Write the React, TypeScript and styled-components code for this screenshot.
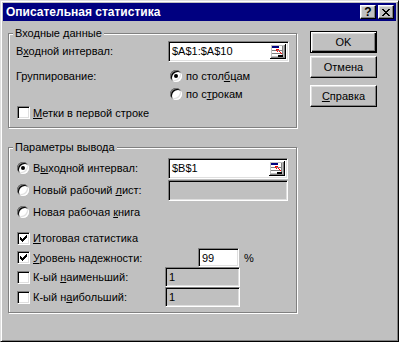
import React from "react";
import styled, { createGlobalStyle, css } from "styled-components";

const GlobalStyle = createGlobalStyle`
  html, body {
    margin: 0;
    padding: 0;
    background: #c0c0c0;
  }
  body {
    font-family: "Liberation Sans", Arial, sans-serif;
    font-size: 11px;
    color: #000;
  }
  * {
    box-sizing: border-box;
  }
`;

const CHECK =
  "M6 0h1v1h-1zM5 1h2v1h-2zM0 2h1v1h-1zM4 2h3v1h-3zM0 3h2v1h-2zM3 3h3v1h-3zM0 4h5v1h-5zM1 5h3v1h-3zM2 6h1v1h-1z";
const CLOSE =
  "M0 0h2v1h-2zM6 0h2v1h-2zM1 1h2v1h-2zM5 1h2v1h-2zM2 2h4v1h-4zM3 3h2v1h-2zM2 4h4v1h-4zM1 5h2v1h-2zM5 5h2v1h-2zM0 6h2v1h-2zM6 6h2v1h-2z";

const RefIcon = () => (
  <svg width="16" height="15" viewBox="0 0 16 15" shapeRendering="crispEdges">
    <rect x="0" y="0" width="16" height="15" fill="#c0c0c0" />
    <rect x="0" y="0" width="15" height="1" fill="#fff" />
    <rect x="0" y="0" width="1" height="14" fill="#fff" />
    <rect x="0" y="14" width="16" height="1" fill="#000" />
    <rect x="15" y="0" width="1" height="15" fill="#000" />
    <rect x="1" y="13" width="14" height="1" fill="#808080" />
    <rect x="14" y="1" width="1" height="13" fill="#808080" />
    <rect x="2" y="2" width="11" height="10" fill="#fff" />
    <rect x="2" y="2" width="7" height="2" fill="#000080" />
    <rect x="2" y="6" width="11" height="1" fill="#808080" />
    <rect x="2" y="9" width="11" height="1" fill="#808080" />
    <rect x="12" y="2" width="1" height="10" fill="#808080" />
    <path d="M6 5h3v1h-2v1h3v1h1v1h1v1h-1v-1h-1v-1h-1v-1h-1v1h-1z" fill="#ff0000" />
    <rect x="8" y="11" width="5" height="2" fill="#000" />
  </svg>
);

const Window = styled.div`
  width: 399px;
  height: 342px;
  background: #c0c0c0;
  border: 1px solid;
  border-color: #dfdfdf #000 #000 #dfdfdf;
  box-shadow: inset 1px 1px 0 #fff, inset -1px -1px 0 #808080;
  padding: 2px;
  display: flex;
  flex-direction: column;
`;

const TitleBar = styled.div`
  height: 18px;
  flex: none;
  background: #000080;
  display: flex;
  align-items: center;
  padding: 0 2px 0 3px;
`;

const Title = styled.div`
  flex: 1;
  color: #fff;
  font-weight: bold;
  font-size: 12px;
  white-space: nowrap;
`;

const TitleButtons = styled.div`
  display: flex;
  gap: 2px;
`;

const TitleButton = styled.div`
  width: 16px;
  height: 14px;
  background: #c0c0c0;
  border: 1px solid;
  border-color: #fff #000 #000 #fff;
  box-shadow: inset -1px -1px 0 #808080, inset 1px 1px 0 #dfdfdf;
  display: flex;
  align-items: center;
  justify-content: center;
  font-weight: bold;
  font-size: 12px;
  line-height: 12px;
`;

const Body = styled.div`
  flex: 1;
  display: flex;
  padding-left: 5px;
`;

const LeftCol = styled.div`
  display: flex;
  flex-direction: column;
  gap: 19px;
  padding-top: 12px;
`;

const ButtonCol = styled.div`
  display: flex;
  flex-direction: column;
  padding-top: 10px;
  margin-left: 13px;
`;

const Group = styled.div<{ $height: number; $padTop: number }>`
  position: relative;
  width: 289px;
  height: ${(p) => p.$height}px;
  border: 1px solid #808080;
  box-shadow: inset 1px 1px 0 #fff, 1px 1px 0 #fff;
  padding: ${(p) => p.$padTop}px 0 0 7px;
`;

const Legend = styled.div`
  position: absolute;
  top: -7px;
  left: 4px;
  padding: 0 2px;
  line-height: 13px;
  background: #c0c0c0;
  white-space: nowrap;
`;

const Row = styled.div<{ $h: number; $top?: number }>`
  display: flex;
  align-items: center;
  height: ${(p) => p.$h}px;
  margin-top: ${(p) => p.$top ?? 0}px;
`;

const LabelCell = styled.div<{ $w?: number; $indent?: number }>`
  display: flex;
  align-items: center;
  flex: none;
  width: ${(p) => (p.$w ? `${p.$w}px` : "auto")};
  padding-left: ${(p) => p.$indent ?? 0}px;
  white-space: nowrap;
`;

const RadioBox = styled.span<{ $checked?: boolean }>`
  position: relative;
  flex: none;
  width: 12px;
  height: 12px;
  margin: 0 4px 0 1px;
  border-radius: 50%;
  background: #fff;
  box-shadow: inset 1px 1px 0 #808080, inset -1px -1px 0 #fff,
    inset 2px 2px 0 #000, inset -2px -2px 0 #dfdfdf;
  &::after {
    content: "";
    display: ${(p) => (p.$checked ? "block" : "none")};
    position: absolute;
    left: 4px;
    top: 4px;
    width: 4px;
    height: 4px;
    border-radius: 50%;
    background: #000;
  }
`;

const CheckBox = styled.span`
  flex: none;
  width: 13px;
  height: 13px;
  margin: 0 3px 0 1px;
  background: #fff;
  border: 1px solid;
  border-color: #808080 #fff #fff #808080;
  box-shadow: inset 1px 1px 0 #000, inset -1px -1px 0 #dfdfdf;
  display: flex;
  align-items: center;
  justify-content: center;
`;

const Field = styled.div<{ $w: number; $h: number; $disabled?: boolean }>`
  flex: none;
  width: ${(p) => p.$w}px;
  height: ${(p) => p.$h}px;
  background: ${(p) => (p.$disabled ? "#c0c0c0" : "#fff")};
  border: 1px solid;
  border-color: #808080 #fff #fff #808080;
  box-shadow: inset 1px 1px 0 #000, inset -1px -1px 0 #dfdfdf;
  display: flex;
  align-items: center;
  padding: 0 2px 0 3px;
  white-space: nowrap;
`;

const FieldText = styled.span`
  flex: 1;
`;

const Unit = styled.span`
  margin-left: 5px;
`;

const PushButton = styled.button<{ $default?: boolean; $top: number }>`
  width: 67px;
  height: 22px;
  margin-top: ${(p) => p.$top}px;
  padding: 0;
  font-family: "Liberation Sans", Arial, sans-serif;
  font-size: 11px;
  font-weight: normal;
  color: #000;
  background: #c0c0c0;
  border: 1px solid;
  border-color: #fff #000 #000 #fff;
  box-shadow: inset -1px -1px 0 #808080, inset 1px 1px 0 #dfdfdf;
  ${(p) =>
    p.$default &&
    css`
      border-color: #000;
      box-shadow: inset 1px 1px 0 #fff, inset -1px -1px 0 #000,
        inset -2px -2px 0 #808080, inset 2px 2px 0 #dfdfdf;
    `}
`;

const Radio = ({ checked, children }: { checked?: boolean; children: React.ReactNode }) => (
  <>
    <RadioBox $checked={checked} />
    <span>{children}</span>
  </>
);

const Check = ({ checked, children }: { checked?: boolean; children: React.ReactNode }) => (
  <>
    <CheckBox>
      {checked && (
        <svg width="7" height="7" viewBox="0 0 7 7" shapeRendering="crispEdges">
          <path d={CHECK} fill="#000" />
        </svg>
      )}
    </CheckBox>
    <span>{children}</span>
  </>
);

export default function App() {
  return (
    <>
      <GlobalStyle />
      <Window>
        <TitleBar>
          <Title>Описательная статистика</Title>
          <TitleButtons>
            <TitleButton>?</TitleButton>
            <TitleButton>
              <svg width="8" height="7" viewBox="0 0 8 7" shapeRendering="crispEdges">
                <path d={CLOSE} fill="#000" />
              </svg>
            </TitleButton>
          </TitleButtons>
        </TitleBar>
        <Body>
          <LeftCol>
            <Group $height={95} $padTop={6}>
              <Legend>Входные данные</Legend>
              <Row $h={22}>
                <LabelCell $w={152}>
                  <span>
                    В<u>х</u>одной интервал:
                  </span>
                </LabelCell>
                <Field $w={121} $h={21}>
                  <FieldText>$A$1:$A$10</FieldText>
                  <RefIcon />
                </Field>
              </Row>
              <Row $h={18} $top={5}>
                <LabelCell $w={152}>Группирование:</LabelCell>
                <LabelCell $indent={1}>
                  <Radio checked>
                    по стол<u>б</u>цам
                  </Radio>
                </LabelCell>
              </Row>
              <Row $h={18}>
                <LabelCell $w={152} />
                <LabelCell $indent={1}>
                  <Radio>
                    по с<u>т</u>рокам
                  </Radio>
                </LabelCell>
              </Row>
              <Row $h={19}>
                <LabelCell>
                  <Check>
                    <u>М</u>етки в первой строке
                  </Check>
                </LabelCell>
              </Row>
            </Group>

            <Group $height={166} $padTop={9}>
              <Legend>Параметры вывода</Legend>
              <Row $h={22}>
                <LabelCell $w={152}>
                  <Radio checked>
                    В<u>ы</u>ходной интервал:
                  </Radio>
                </LabelCell>
                <Field $w={120} $h={21}>
                  <FieldText>$B$1</FieldText>
                  <RefIcon />
                </Field>
              </Row>
              <Row $h={22}>
                <LabelCell $w={152}>
                  <Radio>
                    Новый рабочий <u>л</u>ист:
                  </Radio>
                </LabelCell>
                <Field $w={120} $h={21} $disabled />
              </Row>
              <Row $h={22}>
                <LabelCell>
                  <Radio>
                    Новая рабочая <u>к</u>нига
                  </Radio>
                </LabelCell>
              </Row>
              <Row $h={20} $top={5}>
                <LabelCell>
                  <Check checked>
                    <u>И</u>тоговая статистика
                  </Check>
                </LabelCell>
              </Row>
              <Row $h={19}>
                <LabelCell $w={182}>
                  <Check checked>
                    <u>У</u>ровень надежности:
                  </Check>
                </LabelCell>
                <Field $w={41} $h={19}>
                  <FieldText>99</FieldText>
                </Field>
                <Unit>%</Unit>
              </Row>
              <Row $h={20}>
                <LabelCell $w={149}>
                  <Check>
                    К-ый <u>н</u>аименьший:
                  </Check>
                </LabelCell>
                <Field $w={75} $h={20} $disabled>
                  <FieldText>1</FieldText>
                </Field>
              </Row>
              <Row $h={20}>
                <LabelCell $w={149}>
                  <Check>
                    К-ый н<u>а</u>ибольший:
                  </Check>
                </LabelCell>
                <Field $w={75} $h={20} $disabled>
                  <FieldText>1</FieldText>
                </Field>
              </Row>
            </Group>
          </LeftCol>

          <ButtonCol>
            <PushButton $default $top={0}>
              OK
            </PushButton>
            <PushButton $top={3}>Отмена</PushButton>
            <PushButton $top={7}>
              <u>С</u>правка
            </PushButton>
          </ButtonCol>
        </Body>
      </Window>
    </>
  );
}
